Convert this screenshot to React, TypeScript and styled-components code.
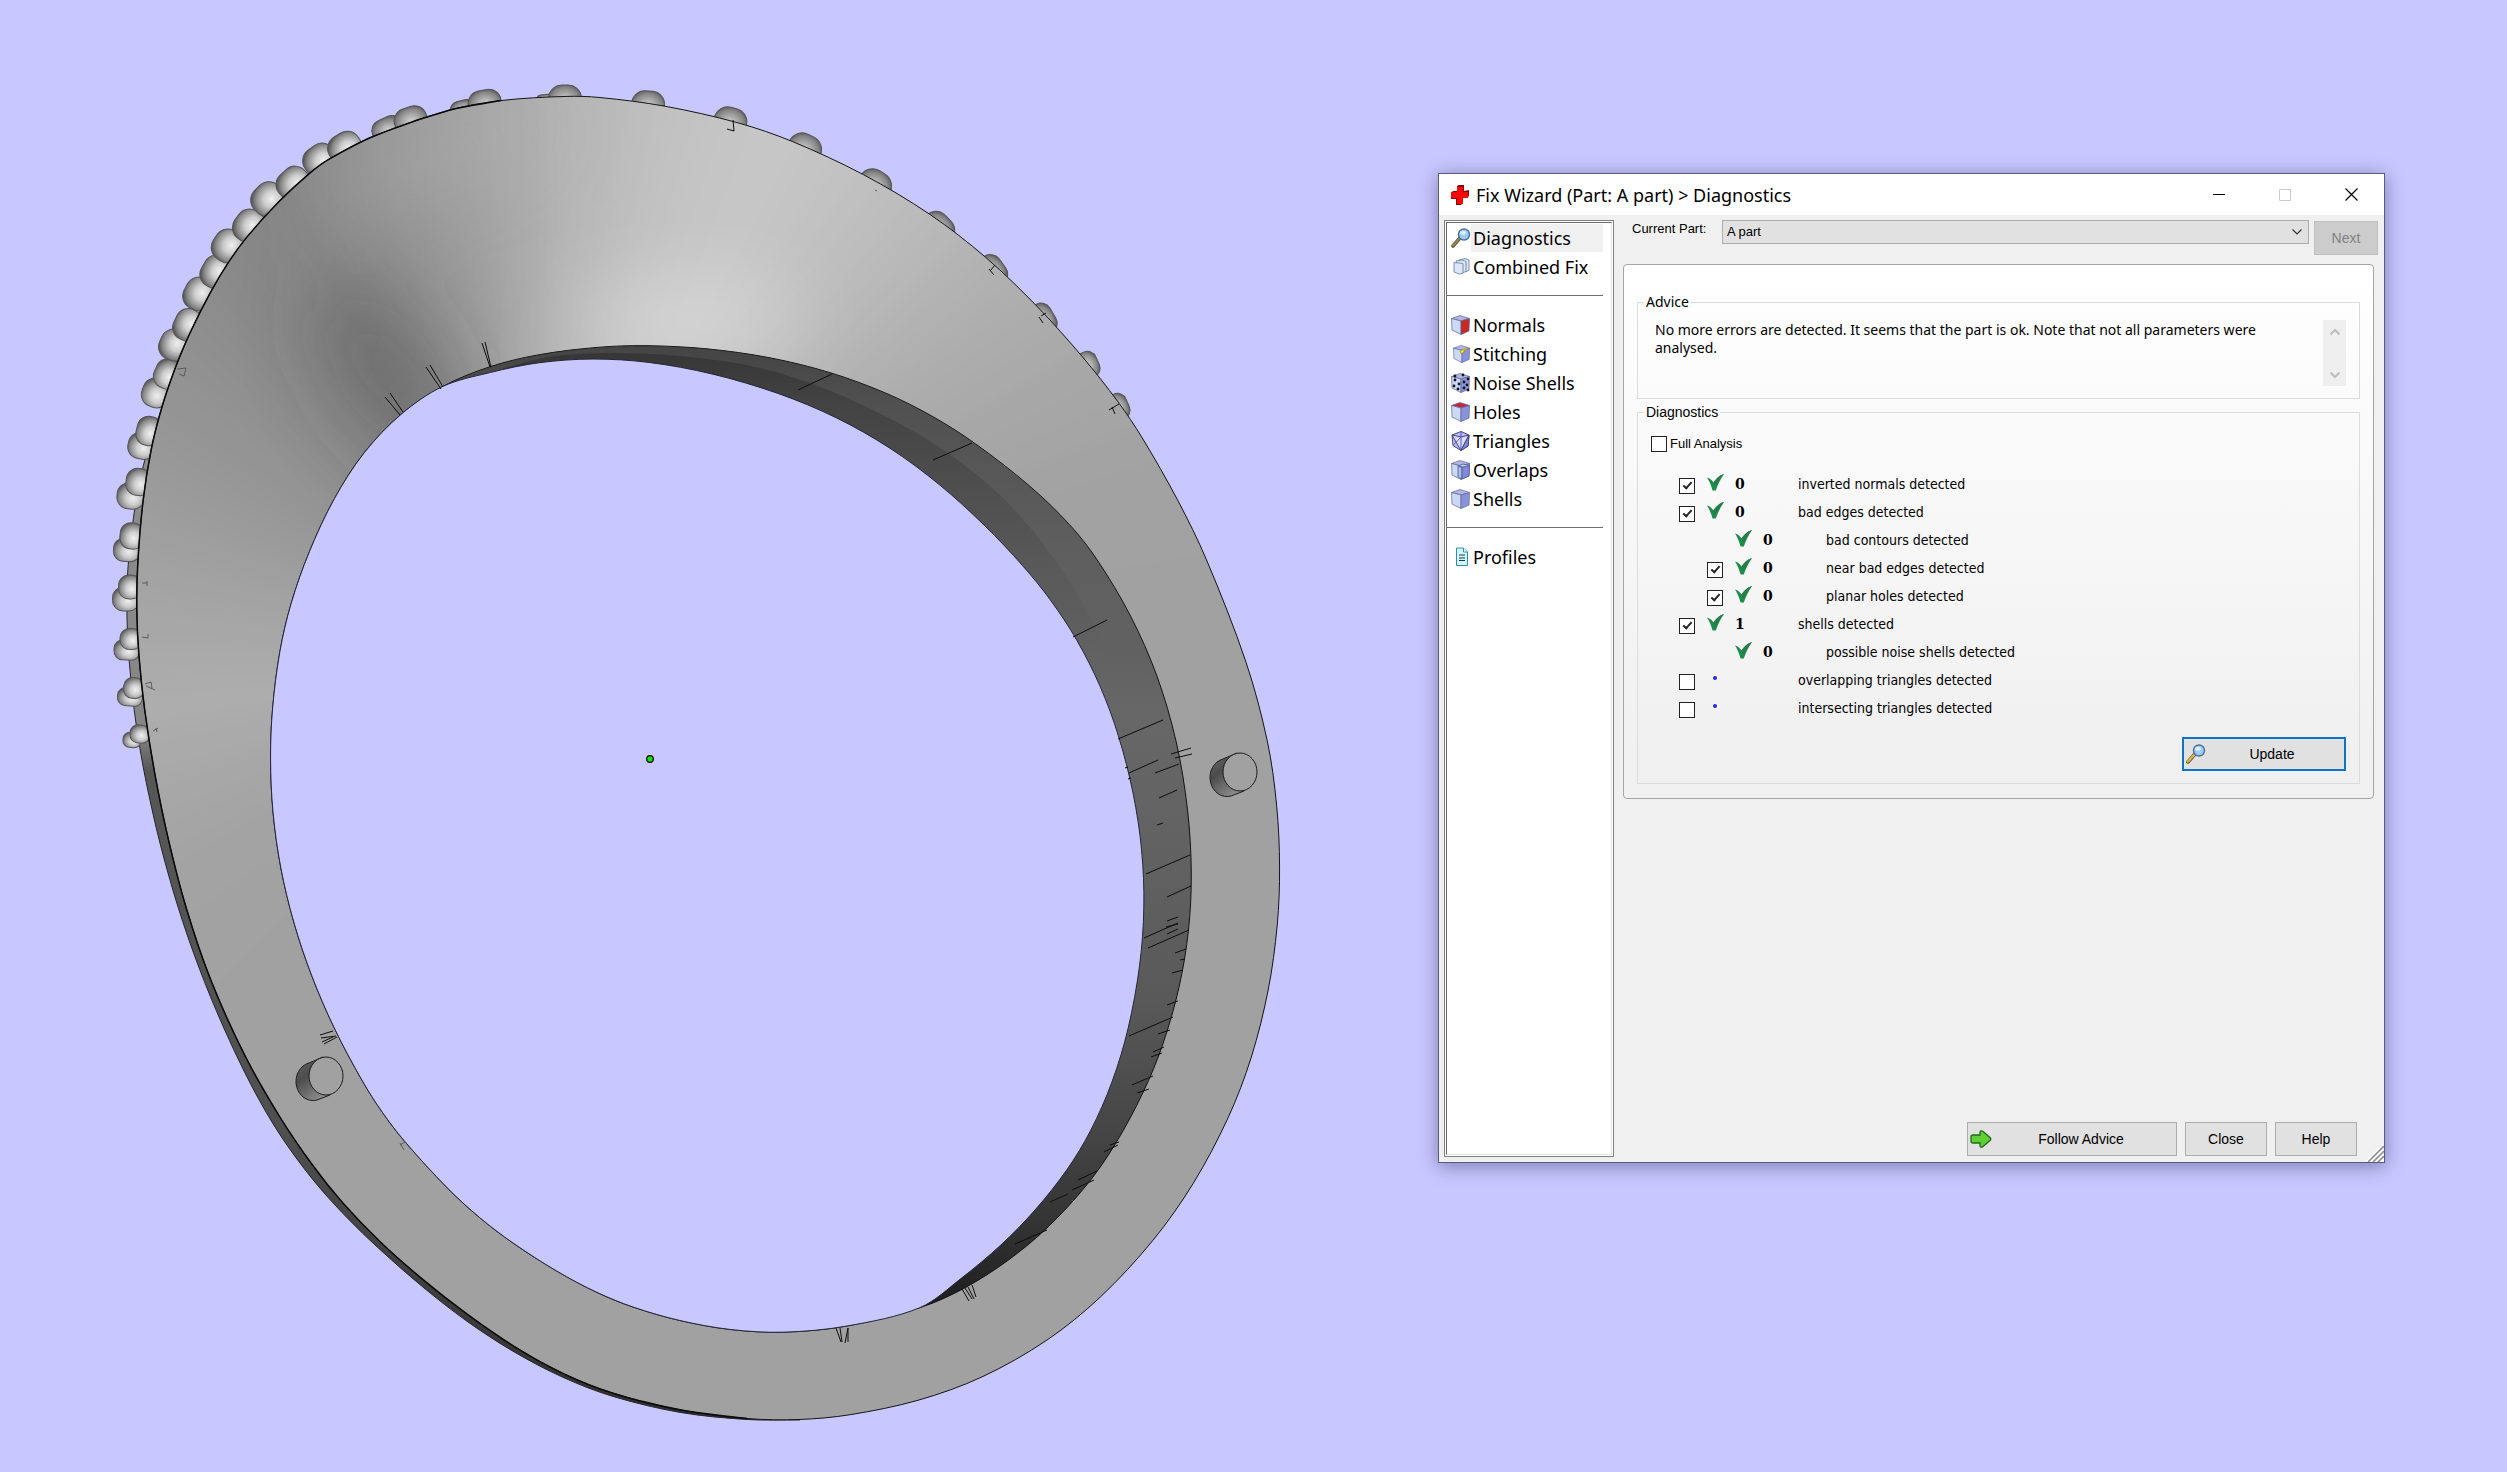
import React from "react";
import styled, { createGlobalStyle } from "styled-components";

const UI = '"Noto Sans", "Open Sans", sans-serif';
const MS = '"Liberation Sans", Arial, sans-serif';
const TAHOMA = '"DejaVu Sans Condensed", "Noto Sans", sans-serif';

const GlobalStyle = createGlobalStyle`
  *, *::before, *::after { box-sizing: border-box; }
  body { margin: 0; background: #c8c7ff; color: #000; font-family: ${MS}; }
`;

/* ------------------------------------------------------------------ */
/* 3D view                                                             */
/* ------------------------------------------------------------------ */

type Pt = [number, number];

const OUTER_TOP: Pt[] = [
  [566, 97], [600, 98], [665, 106], [738, 123], [792, 142], [863, 175], [930, 214], [986, 258],
  [1037, 307], [1082, 357], [1118, 402], [1142, 438], [1177, 500], [1206, 560], [1247, 662],
  [1267, 741], [1276, 805], [1279, 867], [1277, 925], [1268, 990], [1251, 1057], [1228, 1117],
  [1193, 1183], [1153, 1240], [1100, 1296], [1047, 1340], [982, 1377], [918, 1400], [850, 1414],
  [800, 1419],
];

const OUTER_LEFT: Pt[] = [
  [747, 1418], [680, 1410], [613, 1393], [563, 1373], [513, 1346], [467, 1313], [423, 1279],
  [380, 1242], [343, 1203], [313, 1165], [280, 1116], [245, 1056], [210, 980], [187, 908],
  [169, 840], [155, 775], [145, 710], [139, 655], [137, 610], [138, 565], [143, 502], [151, 450],
  [162, 408], [176, 366], [191, 332], [210, 293], [229, 262], [248, 236], [279, 201], [310, 174],
  [329, 160], [373, 135], [450, 110], [501, 101],
];

const INNER_RIGHT: Pt[] = [
  [443, 387], [490, 367], [539, 355], [597, 348], [646, 346], [707, 349], [770, 358], [830, 373],
  [886, 393], [932, 417], [975, 444], [1030, 486], [1069, 525], [1097, 560], [1130, 616],
  [1157, 676], [1176, 742], [1187, 810], [1191, 873], [1188, 930], [1179, 988], [1162, 1045],
  [1143, 1092], [1115, 1143], [1087, 1185], [1047, 1228], [1007, 1260], [963, 1288], [920, 1308],
];

const BACK_RIGHT: Pt[] = [
  [443, 387], [490, 372], [539, 363], [593, 359], [649, 363], [712, 374], [778, 394], [836, 418],
  [890, 448], [939, 485], [985, 526], [1022, 566], [1050, 600], [1077, 640], [1100, 687],
  [1118, 736], [1133, 793], [1141, 850], [1144, 907], [1139, 965], [1128, 1028], [1112, 1082],
  [1090, 1130], [1067, 1170], [1035, 1210], [1000, 1244], [962, 1280], [920, 1308],
];

const INNER_LEFT: Pt[] = [
  [847, 1326], [783, 1332], [730, 1329], [680, 1320], [633, 1307], [597, 1292], [557, 1271],
  [513, 1243], [480, 1217], [447, 1188], [405, 1142], [383, 1112], [362, 1080], [334, 1028],
  [312, 975], [294, 922], [281, 868], [273, 812], [271, 758], [273, 708], [280, 652], [291, 604],
  [310, 552], [335, 499], [364, 453], [401, 414],
];

const SIDE_OUTER: Pt[] = [
  [150, 440], [135, 490], [129, 565], [127, 618], [130, 664], [134, 710], [140, 746], [147, 786],
  [160, 843], [178, 907], [199, 967], [223, 1025], [252, 1086], [280, 1135], [313, 1180],
  [347, 1217], [380, 1249], [423, 1287], [467, 1321], [513, 1351], [563, 1377], [613, 1396],
  [680, 1413], [747, 1420], [800, 1420],
];

/** Evens out small irregularities of a contour without shrinking it. */
function fair(points: Pt[], closed = true): Pt[] {
  let pts = points;
  const n = points.length;
  [0.5, -0.53, 0.5, -0.53, 0.5, -0.53].forEach((k) => {
    pts = pts.map((p, i): Pt => {
      if (!closed && (i === 0 || i === n - 1)) return p;
      const a = pts[(i - 1 + n) % n];
      const b = pts[(i + 1) % n];
      const da = Math.hypot(p[0] - a[0], p[1] - a[1]);
      const db = Math.hypot(b[0] - p[0], b[1] - p[1]);
      const wa = db / (da + db);
      return [
        p[0] + k * (a[0] * wa + b[0] * (1 - wa) - p[0]),
        p[1] + k * (a[1] * wa + b[1] * (1 - wa) - p[1]),
      ];
    });
  });
  return pts;
}

/** Closed or open smooth curve through the given points. */
function curve(points: Pt[], closed = true): string {
  const n = points.length;
  const at = (i: number): Pt => (closed ? points[(i + n) % n] : points[Math.max(0, Math.min(n - 1, i))]);
  let d = `M${points[0][0]} ${points[0][1]}`;
  for (let i = 0; i < (closed ? n : n - 1); i += 1) {
    const [a, b, c, e] = [at(i - 1), at(i), at(i + 1), at(i + 2)];
    const span = Math.hypot(c[0] - b[0], c[1] - b[1]);
    const s1 = span / (span + Math.hypot(b[0] - a[0], b[1] - a[1]) || 1) / 3;
    const s2 = span / (span + Math.hypot(e[0] - c[0], e[1] - c[1]) || 1) / 3;
    d += `C${b[0] + (c[0] - a[0]) * s1} ${b[1] + (c[1] - a[1]) * s1} ${c[0] - (e[0] - b[0]) * s2} ${c[1] - (e[1] - b[1]) * s2} ${c[0]} ${c[1]}`;
  }
  return closed ? `${d}Z` : d;
}

const outer = fair([...OUTER_TOP, ...OUTER_LEFT]);
const inner = fair([...INNER_RIGHT, ...INNER_LEFT]);
const back = fair([inner[0], ...BACK_RIGHT.slice(1, -1), inner[INNER_RIGHT.length - 1]], false);
const side = fair(SIDE_OUTER, false);

const outerPath = curve(outer);
const outerLeftPath = curve(outer.slice(OUTER_TOP.length), false);
const innerPath = curve(inner);
const holePath = curve([...back, ...inner.slice(INNER_RIGHT.length)]);
const sidePath = `${curve(side, false)}L800 1300L300 800Z`;
const facetPath = `${curve([[443, 387], [539, 359], [600, 353], [690, 357], [760, 368], [823, 388], [885, 416], [939, 447], [1002, 497], [1055, 560], [1096, 628], [1125, 700]], false)}L1240 700L1100 360L600 300Z`;

/** Grey level of the face, by angle in degrees around the ring. */
const TONES: Pt[] = [
  [-180, 170], [-170, 164], [-155, 154], [-140, 145], [-129, 138], [-118, 134], [-111, 141],
  [-103, 153], [-94, 168], [-86, 182], [-76, 194], [-66, 199], [-57, 193], [-45, 181], [-36, 173],
  [-28, 167], [-16, 162], [0, 161], [90, 161], [130, 161], [148, 163], [162, 168], [173, 173], [180, 170],
];

function tone(angle: number): number {
  const k = TONES.findIndex(([a]) => a >= angle);
  if (k <= 0) return TONES[0][1];
  const [a0, t0] = TONES[k - 1];
  const [a1, t1] = TONES[k];
  return Math.round(t0 + ((t1 - t0) * (angle - a0)) / (a1 - a0));
}

const WEDGES = Array.from({ length: 120 }, (_, i) => {
  const a = -180 + i * 3;
  const p = (deg: number) => {
    const r = (deg * Math.PI) / 180;
    return `${540 + 1200 * Math.cos(r)},${660 + 1200 * Math.sin(r)}`;
  };
  const t = tone(a + 1.5);
  return { points: `540,660 ${p(a)} ${p(a + 3.4)}`, fill: `rgb(${t},${t},${t})` };
});

/* x, y, width, height, rotation */
type BeadSpec = [number, number, number, number, number];

const BEADS_BRIGHT: BeadSpec[] = [
  [132, 740, 18, 15, 5], [140, 734, 20, 18, 5], [130, 697, 25, 18, 5], [134, 688, 21, 21, 5],
  [127, 650, 26, 20, 2], [131, 639, 22, 21, 0], [126, 599, 27, 24, 0], [130, 587, 23, 24, 0],
  [127, 550, 27, 23, 3], [132, 536, 24, 26, 6], [131, 496, 28, 26, 6], [139, 482, 26, 27, 8],
  [142, 446, 28, 26, 12], [149, 431, 25, 29, 14], [156, 393, 28, 29, 20], [168, 374, 27, 30, 24],
  [174, 345, 31, 29, -66], [188, 325, 32, 28, -64], [199, 294, 33, 30, -62], [216, 272, 33, 29, -60],
  [228, 246, 33, 31, -56], [249, 226, 33, 30, -54], [268, 199, 34, 31, -46], [293, 183, 34, 29, -42],
  [320, 160, 34, 30, -36], [345, 148, 34, 30, -32],
];

const BEADS_TOP: BeadSpec[] = [
  [388, 130, 32, 25, -24], [411, 121, 33, 28, -20], [463, 110, 25, 19, -14], [485, 104, 33, 28, -10],
  [546, 99, 18, 9, -5], [565, 100, 33, 30, 0], [648, 106, 33, 30, 4], [730, 123, 33, 31, 14],
  [804, 150, 34, 32, 26], [874, 186, 34, 32, 34], [938, 228, 34, 28, 46], [992, 271, 33, 26, 54],
  [1043, 319, 32, 23, 60], [1088, 365, 27, 21, 66], [1118, 407, 27, 21, 66],
];

type Seam = [number, number, number, number];

const SEAMS: Seam[] = [
  [482, 343, 490, 367], [485, 342, 491, 367], [426, 367, 441, 389], [430, 365, 443, 387],
  [385, 397, 400, 415], [390, 393, 403, 412], [798, 390, 832, 374], [933, 460, 972, 443],
  [1073, 637, 1107, 620], [1118, 739, 1163, 720], [1129, 773, 1158, 760], [1155, 773, 1179, 764],
  [1159, 798, 1177, 790], [1157, 825, 1163, 823], [1146, 874, 1190, 855], [1167, 897, 1191, 886],
  [1144, 938, 1178, 923], [1148, 948, 1189, 930], [1167, 921, 1178, 917], [1166, 927, 1178, 924],
  [1167, 934, 1178, 929], [1175, 953, 1186, 949], [1180, 960, 1185, 959], [1172, 973, 1183, 970],
  [1167, 1005, 1178, 1001], [1129, 1036, 1173, 1017], [1158, 1034, 1170, 1030],
  [1153, 1052, 1164, 1047], [1151, 1057, 1162, 1053], [1132, 1085, 1153, 1076],
  [1137, 1093, 1149, 1089], [1104, 1152, 1118, 1145], [1110, 1145, 1119, 1142],
  [1078, 1180, 1097, 1171], [1072, 1190, 1094, 1180], [1050, 1202, 1068, 1194],
  [1015, 1244, 1047, 1230], [1171, 754, 1191, 748], [1175, 758, 1192, 754],
  [1125, 768, 1128, 767], [1128, 779, 1131, 778], [320, 1035, 333, 1031], [321, 1038, 336, 1036],
  [322, 1042, 333, 1037], [324, 1044, 337, 1037], [836, 1328, 841, 1342], [840, 1328, 842, 1342],
  [845, 1343, 848, 1328], [848, 1342, 848, 1328], [962, 1289, 969, 1301], [965, 1288, 972, 1299],
  [968, 1287, 974, 1299], [972, 1285, 976, 1297], [727, 129, 734, 131], [733, 120, 734, 131],
  [989, 269, 994, 275], [990, 271, 995, 265], [1039, 317, 1043, 323], [1041, 316, 1046, 313],
  [1109, 410, 1119, 404], [1112, 407, 1115, 414],
];

const FAINT_SEAMS: Seam[] = [
  [177, 369, 186, 368], [179, 374, 184, 376], [186, 368, 184, 376], [142, 583, 147, 583],
  [147, 581, 147, 586], [142, 637, 148, 638], [148, 634, 148, 638], [145, 684, 151, 682],
  [146, 686, 155, 690], [151, 682, 152, 688], [153, 731, 158, 728], [156, 728, 157, 732],
  [875, 190, 877, 191], [400, 1143, 404, 1150], [400, 1145, 405, 1142],
];

const Scene = styled.svg`
  display: block;
  width: 100%;
  height: auto;
`;

function Beads({ items, fill }: { items: BeadSpec[]; fill: string }) {
  return (
    <g fill={fill} stroke="#555" strokeWidth="1">
      {items.map(([x, y, w, h, r]) => (
        <rect key={`${x}-${y}`} x={x - w / 2} y={y - h / 2} width={w} height={h} rx={Math.min(w, h) * 0.44} transform={`rotate(${r} ${x} ${y})`} />
      ))}
    </g>
  );
}

function Seams({ items, color }: { items: Seam[]; color: string }) {
  return (
    <g stroke={color} strokeWidth="1">
      {items.map((s) => <line key={s.join()} x1={s[0]} y1={s[1]} x2={s[2]} y2={s[3]} />)}
    </g>
  );
}

function Peg({ x, y, dx, dy }: { x: number; y: number; dx: number; dy: number }) {
  return (
    <g stroke="#1c1c1c">
      <path
        d={`M${x - 3} ${y - 19}L${x + dx - 3} ${y + dy - 19}A17 19 0 0 0 ${x + dx + 5} ${y + dy + 18}L${x + 4} ${y + 19}Z`}
        fill="url(#pegSide)"
        strokeWidth="1"
      />
      <ellipse cx={x} cy={y} rx="17" ry="19" fill="#a1a1a1" strokeWidth="1" />
    </g>
  );
}

function RingScene() {
  return (
    <Scene viewBox="0 0 2507 1472" role="img" aria-label="Ring model">
      <defs>
        <clipPath id="face">
          <path d={`${outerPath}${innerPath}`} clipRule="evenodd" />
        </clipPath>
        <clipPath id="wall"><path d={innerPath} /></clipPath>
        <filter id="soft" x="-10%" y="-10%" width="120%" height="120%"><feGaussianBlur stdDeviation="9" /></filter>
        <filter id="haze" x="-60%" y="-60%" width="220%" height="220%"><feGaussianBlur stdDeviation="38" /></filter>
        <linearGradient id="wallTone" gradientUnits="userSpaceOnUse" x1="0" y1="346" x2="0" y2="1308">
          <stop offset="0" stopColor="#343434" />
          <stop offset="0.06" stopColor="#434343" />
          <stop offset="0.22" stopColor="#585858" />
          <stop offset="0.38" stopColor="#676767" />
          <stop offset="0.52" stopColor="#626262" />
          <stop offset="0.68" stopColor="#595959" />
          <stop offset="0.82" stopColor="#454545" />
          <stop offset="0.92" stopColor="#323232" />
          <stop offset="1" stopColor="#1c1c1c" />
        </linearGradient>
        <linearGradient id="facetTone" gradientUnits="userSpaceOnUse" x1="0" y1="346" x2="0" y2="660">
          <stop offset="0" stopColor="#fff" stopOpacity="0.08" />
          <stop offset="0.6" stopColor="#fff" stopOpacity="0.05" />
          <stop offset="1" stopColor="#fff" stopOpacity="0" />
        </linearGradient>
        <linearGradient id="sideTone" gradientUnits="userSpaceOnUse" x1="0" y1="480" x2="0" y2="1418">
          <stop offset="0" stopColor="#8d8d8d" />
          <stop offset="0.27" stopColor="#868686" />
          <stop offset="0.31" stopColor="#575757" />
          <stop offset="0.7" stopColor="#4f4f4f" />
          <stop offset="1" stopColor="#303030" />
        </linearGradient>
        <radialGradient id="beadBright" cx="0.58" cy="0.58" r="0.62">
          <stop offset="0" stopColor="#efefef" />
          <stop offset="0.4" stopColor="#cdcdcd" />
          <stop offset="0.78" stopColor="#8c8c8c" />
          <stop offset="1" stopColor="#585858" />
        </radialGradient>
        <radialGradient id="beadTop" cx="0.5" cy="0.52" r="0.58">
          <stop offset="0" stopColor="#d2d2d2" />
          <stop offset="0.4" stopColor="#adadad" />
          <stop offset="0.75" stopColor="#858585" />
          <stop offset="1" stopColor="#545454" />
        </radialGradient>
        <linearGradient id="pegSide" x1="0" y1="0" x2="0.6" y2="1">
          <stop offset="0" stopColor="#6a6a6a" />
          <stop offset="0.45" stopColor="#4c4c4c" />
          <stop offset="1" stopColor="#8a8a8a" />
        </linearGradient>
      </defs>

      <path d={sidePath} fill="url(#sideTone)" />
      <path d={curve(side, false)} fill="none" stroke="#262626" strokeWidth="1" />
      <Beads items={BEADS_TOP} fill="url(#beadTop)" />
      <Beads items={BEADS_BRIGHT} fill="url(#beadBright)" />

      <g clipPath="url(#face)">
        <rect x="100" y="60" width="1220" height="1400" fill="#a1a1a1" />
        <g filter="url(#soft)">
          {WEDGES.map((w) => <polygon key={w.points} points={w.points} fill={w.fill} />)}
        </g>
        <g filter="url(#haze)">
          <ellipse cx="388" cy="372" rx="52" ry="105" transform="rotate(-34 388 372)" fill="#404040" opacity="0.34" />
          <ellipse cx="690" cy="320" rx="120" ry="44" fill="#fff" opacity="0.26" />
          <ellipse cx="430" cy="160" rx="120" ry="34" transform="rotate(-18 430 160)" fill="#b4b4b4" opacity="0.4" />
        </g>
      </g>
      <path d={outerPath} fill="none" stroke="#151515" strokeWidth="1" />
      <path d={outerLeftPath} fill="none" stroke="#0b0b0b" strokeWidth="1.5" />

      <path d={innerPath} fill="url(#wallTone)" stroke="#101010" strokeWidth="1" />
      <path d={facetPath} clipPath="url(#wall)" fill="url(#facetTone)" />
      <path d={holePath} fill="#c8c7ff" stroke="#26263a" strokeWidth="1" />

      <Seams items={SEAMS} color="#0d0d0d" />
      <Seams items={FAINT_SEAMS} color="#5c5c5c" />
      <Peg x={1240} y={772} dx={-14} dy={6} />
      <Peg x={326} y={1076} dx={-14} dy={6} />
      <circle cx="650" cy="759" r="3.3" fill="#12e012" stroke="#000" strokeWidth="1.2" />
    </Scene>
  );
}

/* ------------------------------------------------------------------ */
/* Icons                                                               */
/* ------------------------------------------------------------------ */

function CrossIcon() {
  return (
    <svg width="20" height="20" viewBox="0 0 20 20" aria-hidden="true">
      <path d="M7 1l2-1h5v6l5-1v6l-2 2h-4v5l-2 2H6v-6H1V8l2-2h4z" fill="#8b0000" />
      <path d="M7 2h6v5h5v6h-5v6H7v-6H1V7h6z" fill="#f40808" />
    </svg>
  );
}

function MagnifierIcon({ handle = "#8c8650" }: { handle?: string }) {
  return (
    <svg width="20" height="20" viewBox="0 0 20 20" aria-hidden="true">
      <path d="M2 18L8.500 10.500" stroke="#5a5638" strokeWidth="3.600" strokeLinecap="round" />
      <path d="M2 17.500L8.500 10.500" stroke={handle} strokeWidth="2.400" strokeLinecap="round" />
      <circle cx="13" cy="6.500" r="5.500" fill="#9ccdf3" stroke="#4a6f9e" strokeWidth="1.400" />
      <ellipse cx="12" cy="4.800" rx="3" ry="2" fill="#d9efff" />
    </svg>
  );
}

type Cube = "normals" | "stitching" | "noise" | "holes" | "triangles" | "overlaps" | "shells";

function CubeIcon({ kind }: { kind: Cube }) {
  if (kind === "triangles") {
    return (
      <svg width="20" height="20" viewBox="0 0 20 20" aria-hidden="true">
        <path d="M1 4l9-3.500L18 4l-1 11-7 4.500-8-5z" fill="#b9baf2" stroke="#45458c" strokeLinejoin="round" />
        <path d="M1 4l9 2 8-2-8 15.500z" fill="#dcdcff" stroke="#45458c" strokeLinejoin="round" />
        <path d="M10 .5V19.500M10 6l-8 8.500" fill="none" stroke="#5b5bb0" />
        <path d="M18 4l-1 11-7 4.500z" fill="#8888d8" stroke="#45458c" strokeLinejoin="round" />
      </svg>
    );
  }
  const small = kind === "stitching";
  return (
    <svg width="20" height="20" viewBox="0 0 20 20" aria-hidden="true">
      <g transform={small ? "translate(2 1) scale(.9)" : undefined} stroke="#5a6399" strokeWidth=".7" strokeLinejoin="round">
        <path d="M.5 3.500L9 .5l9.500 3-8.500 2.500z" fill={kind === "holes" ? "#c8243e" : "#b3b6e2"} />
        <path d="M.5 3.500L10 6v13.500L1 15z" fill="#ccd9f5" />
        <path d="M10 6l8.500-2.500L18 16l-8 3.500z" fill={kind === "normals" ? "#c62a20" : "#8b92dc"} />
      </g>
      {kind === "stitching" && <path d="M9 7l6-3 3 .5-5 2v2l-3 1z" fill="#f5e23a" stroke="#857a20" strokeWidth=".6" />}
      {kind === "overlaps" && (
        <g stroke="#4d5c90" strokeWidth=".8">
          <path d="M7 6l5-2 7 1.500-6 2z" fill="#bcc6ee" />
          <path d="M7 6l4 1.500V19l-4-2z" fill="#a9bde6" />
          <path d="M11 7.500l7.500-2L18 16l-7 3z" fill="#8189d8" />
        </g>
      )}
      {kind === "noise" && (
        <g fill="#14151f">
          {[[4, 7], [8, 11], [3, 13], [7, 16], [13, 9], [16, 12], [13, 15], [17, 17], [12, 2], [4, 3], [17, 6]].map(([x, y]) => (
            <circle key={`${x}-${y}`} cx={x} cy={y} r="1.400" />
          ))}
        </g>
      )}
    </svg>
  );
}

function CombinedIcon() {
  return (
    <svg width="20" height="20" viewBox="0 0 20 20" aria-hidden="true">
      <g fill="#dbe6f6" stroke="#6f86ab" strokeWidth=".9" strokeLinejoin="round">
        <path d="M8 3l6-1.500 4 1.500v10l-3 2z" />
        <path d="M5 4l6-1 4 1.500v10l-4 1.500z" />
        <path d="M3 5.500l5 .5 4 .5v10L8 17l-5-2z" />
      </g>
    </svg>
  );
}

function ProfileIcon() {
  return (
    <svg width="20" height="20" viewBox="0 0 20 20" aria-hidden="true">
      <path d="M5.500 1h7l4 4v13.500h-11z" fill="#d6f6fd" stroke="#2a8fb0" />
      <path d="M12.500 1v4h4" fill="#fff" stroke="#2a8fb0" />
      <path d="M8 8h6M8 11h6M8 13.500h6" stroke="#123c5c" strokeWidth="1.200" />
    </svg>
  );
}

function TickIcon() {
  return (
    <svg width="17" height="17" viewBox="0 0 17 17" aria-hidden="true">
      <path d="M0 3.500C2.500 4 5 6 6.500 8.500 9 4.500 12.500 1 17 0 14 4.500 11 10 8.800 16.500H5.500C4.500 12 2.500 7.500 0 3.500z" fill="#1b8f49" />
      <path d="M6.500 8.500C9 4.500 12.500 1 17 0 13.500 4 10.500 8.500 8 13z" fill="#2b7a4b" />
    </svg>
  );
}

function ArrowIcon() {
  return (
    <svg width="22" height="18" viewBox="0 0 22 18" aria-hidden="true">
      <path d="M1 6.500c0-1 1-1.500 2-1.500h7V2c0-1.500 2-1.500 3-.5l7 6c1 1 1 2 0 3l-7 6c-1 1-3 1-3-.5V13H3c-1 0-2-.5-2-1.500z" fill="#5fcf35" stroke="#1f6b18" strokeWidth="1.300" />
    </svg>
  );
}

/* ------------------------------------------------------------------ */
/* Dialog                                                              */
/* ------------------------------------------------------------------ */

const Desktop = styled.main`
  position: relative;
  min-height: 100vh;
  overflow: hidden;
`;

const Dialog = styled.section`
  position: absolute;
  left: 1438px;
  top: 173px;
  width: 947px;
  height: 990px;
  display: flex;
  flex-direction: column;
  background: #f0f0f0;
  border: 1px solid #5c5b7c;
  box-shadow: 0 3px 18px rgba(20, 20, 60, 0.42);
`;

const TitleBar = styled.header`
  display: flex;
  align-items: center;
  height: 41px;
  padding-left: 11px;
  background: #fff;
`;

const Title = styled.h1`
  flex: 1;
  margin: 0 0 0 6px;
  font: 400 18px/24px ${UI};
`;

const CaptionButton = styled.button`
  display: flex;
  align-items: center;
  justify-content: center;
  width: 66px;
  height: 40px;
  padding: 0;
  border: 0;
  background: transparent;
`;

const Body = styled.div`
  flex: 1;
  display: flex;
  gap: 9px;
  padding: 5px 6px 5px 5px;
`;

const Sidebar = styled.nav`
  flex: none;
  width: 170px;
  border: 1px solid #808080;
  background: #fff;
  padding: 1px;
`;

const SidebarInner = styled.ul`
  height: 100%;
  margin: 0;
  padding: 0 8px 0 0;
  list-style: none;
  border: 1px solid #e3e3e3;
  border-top-color: #696969;
  border-left-color: #696969;
`;

const NavItem = styled.li`
  display: flex;
  height: 29px;
`;

const NavLink = styled.a<{ $active?: boolean }>`
  flex: 1;
  display: flex;
  align-items: center;
  color: #000;
  text-decoration: none;
  font: 400 18px/28px ${UI};
  white-space: nowrap;

  svg { flex: none; margin: 0 0 0 4px; }
  span { flex: 1; padding-left: 2px; background: ${(p) => (p.$active ? "#f0f0f0" : "transparent")}; }
`;

const NavRule = styled.li`
  height: 29px;
  padding-top: 14px;

  &::after { content: ""; display: block; height: 1px; background: #707070; }
`;

const Content = styled.div`
  flex: 1;
  display: flex;
  flex-direction: column;
  min-width: 0;
`;

const PartRow = styled.div`
  display: flex;
  align-items: flex-start;
  height: 44px;
  padding-left: 9px;
`;

const PartLabel = styled.label`
  width: 90px;
  font: 400 13px/18px ${MS};
  white-space: nowrap;
`;

const SelectBox = styled.div`
  position: relative;
  flex: 1;

  svg { position: absolute; right: 7px; top: 8px; pointer-events: none; }
`;

const PartSelect = styled.select`
  display: block;
  width: 100%;
  height: 24px;
  padding: 0 24px 0 4px;
  appearance: none;
  border: 1px solid #adadad;
  border-radius: 0;
  background: #e1e1e1;
  color: #000;
  font: 400 13px/22px ${MS};
`;

const PushButton = styled.button<{ $width: number; $focus?: boolean }>`
  display: flex;
  align-items: center;
  width: ${(p) => p.$width}px;
  height: 34px;
  padding: 0 2px;
  border: ${(p) => (p.$focus ? "2px solid #0f74c4" : "1px solid #adadad")};
  border-radius: 0;
  background: #e1e1e1;
  color: #000;
  font: 400 14px/18px ${MS};

  &:disabled { margin: 1px 0 0 5px; border-color: #bfbfbf; background: #cccccc; color: #838383; }
  svg { flex: none; }
  span { flex: 1; text-align: center; }
  svg + span { padding-right: 4px; }
`;

const Panel = styled.div`
  margin-right: 4px;
  padding: 29px 13px 14px;
  border: 1px solid #a5a5a5;
  border-radius: 4px;
  background: linear-gradient(#fff, #f0f0f0 92%);
`;

const Group = styled.fieldset`
  min-width: 0;
  margin: 0;
  padding: 0 13px 12px;
  border: 1px solid #dcdcdc;

  & + & { margin-top: 5px; }
`;

const Legend = styled.legend<{ $face: string }>`
  margin-left: -7px;
  padding: 0 2px;
  font: 400 14px/16px ${(p) => p.$face};
`;

const AdviceBox = styled.div`
  display: flex;
  align-items: flex-start;
  padding-left: 4px;
`;

const AdviceText = styled.p`
  flex: 1;
  margin: 11px 44px 0 0;
  font: 400 14px/18px ${UI};
`;

const ScrollTrack = styled.div`
  display: flex;
  flex-direction: column;
  justify-content: space-between;
  width: 23px;
  height: 66px;
  margin: 10px 0 0;
  background: #efefef;
`;

const ScrollButton = styled.button`
  display: flex;
  align-items: center;
  justify-content: center;
  height: 23px;
  padding: 0;
  border: 0;
  background: transparent;
`;

const Tick = styled.input`
  position: relative;
  flex: none;
  width: 16px;
  height: 16px;
  margin: 0;
  appearance: none;
  border: 1px solid #222;
  background: #fff;

  &:checked::after {
    content: "";
    position: absolute;
    left: 5px;
    top: 1px;
    width: 5px;
    height: 9px;
    border: solid #222;
    border-width: 0 2px 2px 0;
    transform: rotate(42deg);
  }
`;

const FullAnalysis = styled.label`
  display: flex;
  align-items: center;
  gap: 3px;
  padding: 16px 0 0;
  font: 400 13px/16px ${MS};
`;

const Checks = styled.ul`
  margin: 18px 0 15px;
  padding: 0 0 0 28px;
  list-style: none;
`;

const CheckRow = styled.li<{ $nested?: boolean }>`
  display: grid;
  grid-template-columns: 28px 28px 63px 1fr;
  align-items: center;
  height: 28px;
  padding-left: ${(p) => (p.$nested ? 28 : 0)}px;
  font: 400 14px/20px ${TAHOMA};

  ${Tick} { margin-top: 4px; }
  svg { display: block; margin-bottom: 4px; }
`;

const Count = styled.b`
  font: 700 14px/20px "DejaVu Serif", "Liberation Serif", serif;
`;

const Dot = styled.span`
  width: 4px;
  height: 4px;
  margin: 0 0 4px 6px;
  border-radius: 2px;
  background: #2a2ad0;
`;

const Actions = styled.div`
  display: flex;
  justify-content: flex-end;
`;

const Footer = styled.footer`
  display: flex;
  justify-content: flex-end;
  gap: 8px;
  margin-top: auto;
  padding: 0 21px 1px 0;
`;

const Grip = styled.svg`
  position: absolute;
  right: 0;
  bottom: 0;
`;

type NavEntry = { label: string; icon: React.ReactNode } | null;

const NAV: NavEntry[] = [
  { label: "Diagnostics", icon: <MagnifierIcon /> },
  { label: "Combined Fix", icon: <CombinedIcon /> },
  null,
  { label: "Normals", icon: <CubeIcon kind="normals" /> },
  { label: "Stitching", icon: <CubeIcon kind="stitching" /> },
  { label: "Noise Shells", icon: <CubeIcon kind="noise" /> },
  { label: "Holes", icon: <CubeIcon kind="holes" /> },
  { label: "Triangles", icon: <CubeIcon kind="triangles" /> },
  { label: "Overlaps", icon: <CubeIcon kind="overlaps" /> },
  { label: "Shells", icon: <CubeIcon kind="shells" /> },
  null,
  { label: "Profiles", icon: <ProfileIcon /> },
];

type Check = { label: string; count?: number; nested?: boolean; box?: "on" | "off" };

const CHECKS: Check[] = [
  { label: "inverted normals detected", count: 0, box: "on" },
  { label: "bad edges detected", count: 0, box: "on" },
  { label: "bad contours detected", count: 0, nested: true },
  { label: "near bad edges detected", count: 0, nested: true, box: "on" },
  { label: "planar holes detected", count: 0, nested: true, box: "on" },
  { label: "shells detected", count: 1, box: "on" },
  { label: "possible noise shells detected", count: 0, nested: true },
  { label: "overlapping triangles detected", box: "off" },
  { label: "intersecting triangles detected", box: "off" },
];

function CheckLine({ check, id }: { check: Check; id: string }) {
  return (
    <CheckRow $nested={check.nested}>
      {check.box ? <Tick type="checkbox" id={id} defaultChecked={check.box === "on"} /> : <span />}
      {check.count === undefined ? <Dot /> : <TickIcon />}
      {check.count === undefined ? <span /> : <Count>{check.count}</Count>}
      {check.box ? <label htmlFor={id}>{check.label}</label> : <span>{check.label}</span>}
    </CheckRow>
  );
}

export default function App() {
  return (
    <Desktop>
      <GlobalStyle />
      <RingScene />
      <Dialog aria-labelledby="dialog-title">
        <TitleBar>
          <CrossIcon />
          <Title id="dialog-title">Fix Wizard (Part: A part) &gt; Diagnostics</Title>
          <CaptionButton aria-label="Minimize">
            <svg width="12" height="12" viewBox="0 0 12 12"><path d="M0 5.500h12" stroke="#000" /></svg>
          </CaptionButton>
          <CaptionButton aria-label="Maximize" disabled>
            <svg width="12" height="12" viewBox="0 0 12 12"><path d="M.5.5h11v11H.5z" fill="none" stroke="#ccc" /></svg>
          </CaptionButton>
          <CaptionButton aria-label="Close window">
            <svg width="13" height="13" viewBox="0 0 13 13"><path d="M.5.5l12 12M12.500.5l-12 12" stroke="#000" strokeWidth="1.200" /></svg>
          </CaptionButton>
        </TitleBar>
        <Body>
          <Sidebar aria-label="Fix steps">
            <SidebarInner>
              {NAV.map((entry, i) =>
                entry ? (
                  <NavItem key={entry.label}>
                    <NavLink href={`#${entry.label}`} $active={i === 0}>
                      {entry.icon}
                      <span>{entry.label}</span>
                    </NavLink>
                  </NavItem>
                ) : (
                  <NavRule key={i} role="separator" />
                ),
              )}
            </SidebarInner>
          </Sidebar>
          <Content>
            <PartRow>
              <PartLabel htmlFor="part">Current Part:</PartLabel>
              <SelectBox>
                <PartSelect id="part" defaultValue="a">
                  <option value="a">A part</option>
                </PartSelect>
                <svg width="10" height="8" viewBox="0 0 10 8" aria-hidden="true"><path d="M.5 1.500L5 6l4.500-4.500" fill="none" stroke="#333" strokeWidth="1.200" /></svg>
              </SelectBox>
              <PushButton $width={64} disabled><span>Next</span></PushButton>
            </PartRow>
            <Panel>
              <Group>
                <Legend $face={UI}>Advice</Legend>
                <AdviceBox>
                  <AdviceText>
                    No more errors are detected. It seems that the part is ok. Note that not all parameters were analysed.
                  </AdviceText>
                  <ScrollTrack>
                    <ScrollButton aria-label="Scroll up">
                      <svg width="10" height="8" viewBox="0 0 10 8"><path d="M.5 6.500L5 2l4.500 4.500" fill="none" stroke="#bdbdbd" strokeWidth="2" /></svg>
                    </ScrollButton>
                    <ScrollButton aria-label="Scroll down">
                      <svg width="10" height="8" viewBox="0 0 10 8"><path d="M.5 1.500L5 6l4.500-4.500" fill="none" stroke="#bdbdbd" strokeWidth="2" /></svg>
                    </ScrollButton>
                  </ScrollTrack>
                </AdviceBox>
              </Group>
              <Group>
                <Legend $face={MS}>Diagnostics</Legend>
                <FullAnalysis>
                  <Tick type="checkbox" />
                  Full Analysis
                </FullAnalysis>
                <Checks>
                  {CHECKS.map((check, i) => <CheckLine key={check.label} check={check} id={`check-${i}`} />)}
                </Checks>
                <Actions>
                  <PushButton $width={164} $focus>
                    <MagnifierIcon handle="#e2b34a" />
                    <span>Update</span>
                  </PushButton>
                </Actions>
              </Group>
            </Panel>
            <Footer>
              <PushButton $width={210}>
                <ArrowIcon />
                <span>Follow Advice</span>
              </PushButton>
              <PushButton $width={82}><span>Close</span></PushButton>
              <PushButton $width={82}><span>Help</span></PushButton>
            </Footer>
          </Content>
        </Body>
        <Grip width="18" height="18" viewBox="0 0 18 18" aria-hidden="true">
          <path d="M1 18L18 1M6 18L18 6M11 18l7-7M15 18l3-3" stroke="#fff" strokeWidth="3" />
          <path d="M2 18L18 2M7 18L18 7M12 18l6-6" stroke="#8f8f8f" strokeWidth="1.600" />
        </Grip>
      </Dialog>
    </Desktop>
  );
}
